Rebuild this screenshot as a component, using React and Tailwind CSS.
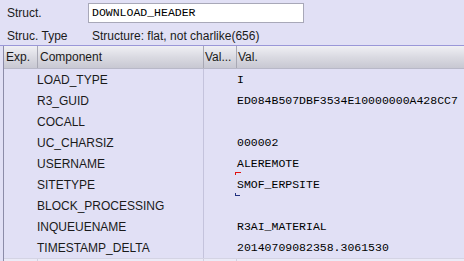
const rows = [
  ['LOAD_TYPE', 'I'],
  ['R3_GUID', 'ED084B507DBF3534E10000000A428CC7'],
  ['COCALL', ''],
  ['UC_CHARSIZ', '000002'],
  ['USERNAME', 'ALEREMOTE'],
  ['SITETYPE', 'SMOF_ERPSITE', true],
  ['BLOCK_PROCESSING', ''],
  ['INQUEUENAME', 'R3AI_MATERIAL'],
  ['TIMESTAMP_DELTA', '20140709082358.3061530'],
]

const sans = "font-['Liberation_Sans',Arial,sans-serif]"
const mono = "font-['Liberation_Mono','Courier_New',monospace]"

export default function App() {
  return (
    <div className={`w-[464px] h-[261px] overflow-hidden bg-[#e1e0f5] text-[12px] text-[#1a1a1a] ${sans}`}>
      <div className="flex items-center h-[25px] pt-[1px]">
        <span className="w-[88px] pl-[7px]">Struct.</span>
        <div className={`w-[216px] h-[20px] bg-white border border-[#a8a8b8] flex items-center pl-[3px] text-[11.5px] text-black ${mono}`}>
          DOWNLOAD_HEADER
        </div>
      </div>
      <div className="flex items-center h-[20px] pt-[1px]">
        <span className="w-[92px] pl-[7px]">Struc. Type</span>
        <span>Structure: flat, not charlike(656)</span>
      </div>
      <div className="h-[1px] bg-[#9a97d8]" />
      <div className="ml-[3px] border-l border-[#8c8ca8]">
        <div className="grid grid-cols-[34px_166px_33px_1fr] h-[23px] bg-gradient-to-b from-[#f0f0f4] via-[#dadae2] to-[#c8c8d2] border-b border-[#b8b8c8]">
          <div className="flex items-center pl-[2px] border-r border-[#a8a8b4]">Exp.</div>
          <div className="flex items-center pl-[2px] border-r border-[#a8a8b4]">Component</div>
          <div className="flex items-center pl-[1px] border-r border-[#a8a8b4]">Val...</div>
          <div className="flex items-center pl-[1px]">Val.</div>
        </div>
        {rows.map(([name, val, focus]) => (
          <div key={name} className="grid grid-cols-[34px_166px_1fr] h-[21px]">
            <div />
            <div className="flex items-center -ml-[1px] border-r border-[#c4c3dc]">{name}</div>
            <div className={`relative flex items-center pl-[33px] text-[11.5px] text-black ${mono}`}>
              {focus && (
                <>
                  <span className="absolute left-[31px] top-[-2px] w-[6px] h-[3px] border-t border-l border-[#e01010]" />
                  <span className="absolute left-[31px] bottom-[-1px] w-[5px] h-[3px] border-b border-l border-[#203080]" />
                </>
              )}
              {val}
            </div>
          </div>
        ))}
        <div className="grid grid-cols-[34px_166px_33px_1fr] h-[6px] bg-[#ebebf7] border-t border-[#d4d4e4]">
          <div className="border-r border-[#d0d0e0]" />
          <div className="border-r border-[#d0d0e0]" />
          <div className="border-r border-[#d0d0e0]" />
          <div />
        </div>
      </div>
    </div>
  )
}
